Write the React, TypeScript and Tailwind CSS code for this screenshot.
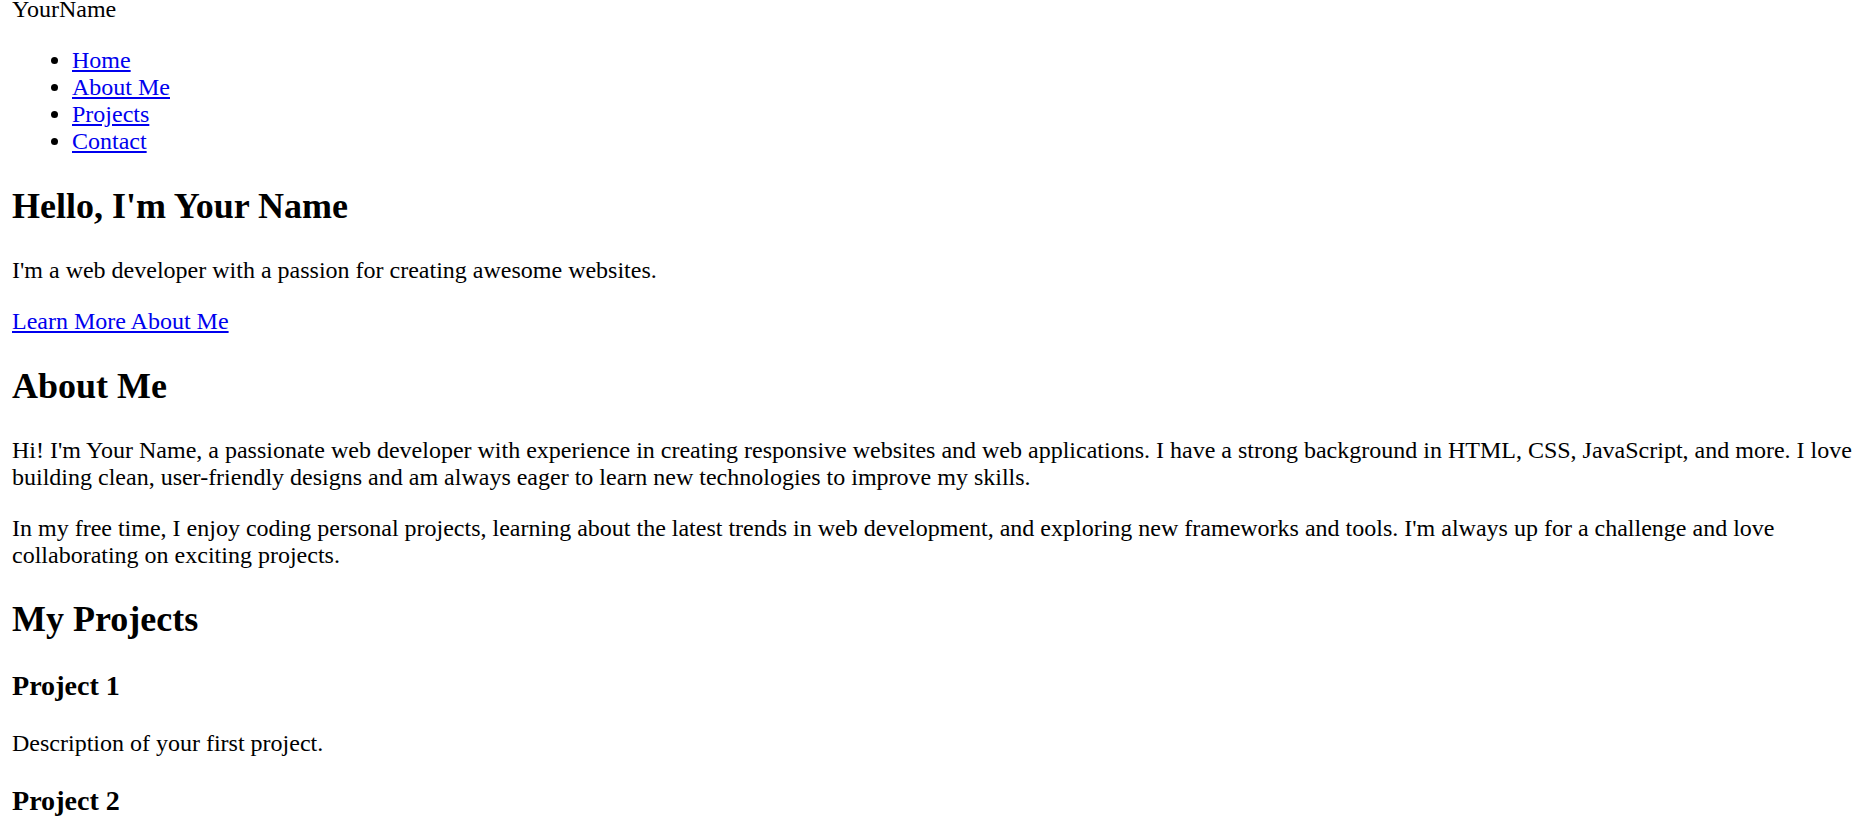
const navLinks = ["Home", "About Me", "Projects", "Contact"];

const projects = [
  { title: "Project 1", description: "Description of your first project." },
  { title: "Project 2", description: "Description of your second project." },
  { title: "Project 3", description: "Description of your third project." },
];

export default function App() {
  return (
    <div className="min-h-screen bg-white text-black font-['Liberation_Serif','Times_New_Roman',serif] text-[24px] leading-[normal]">
      <div className="px-[12px] -mt-[4px]">
        <header>
          <div>YourName</div>
          <nav>
            <ul className="my-[24px] pl-[60px] list-disc">
              {navLinks.map((link) => (
                <li key={link}>
                  <a href="#" className="text-[#0000ee] underline">
                    {link}
                  </a>
                </li>
              ))}
            </ul>
          </nav>
        </header>

        <main>
          <section id="home">
            <h1 className="text-[36px] font-bold my-[29.88px]">Hello, I'm Your Name</h1>
            <p className="my-[24px]">I'm a web developer with a passion for creating awesome websites.</p>
            <p className="my-[24px]">
              <a href="#about" className="text-[#0000ee] underline">
                Learn More About Me
              </a>
            </p>
          </section>

          <section id="about">
            <h2 className="text-[36px] font-bold my-[29.88px]">About Me</h2>
            <p className="my-[24px]">
              Hi! I'm Your Name, a passionate web developer with experience in creating responsive websites and web
              applications. I have a strong background in HTML, CSS, JavaScript, and more. I love building clean,
              user-friendly designs and am always eager to learn new technologies to improve my skills.
            </p>
            <p className="my-[24px]">
              In my free time, I enjoy coding personal projects, learning about the latest trends in web development, and
              exploring new frameworks and tools. I'm always up for a challenge and love collaborating on exciting
              projects.
            </p>
          </section>

          <section id="projects">
            <h2 className="text-[36px] font-bold my-[29.88px]">My Projects</h2>
            {projects.map((p) => (
              <div key={p.title}>
                <h3 className="text-[28.08px] font-bold my-[28.08px]">{p.title}</h3>
                <p className="my-[24px]">{p.description}</p>
              </div>
            ))}
          </section>

          <section id="contact">
            <h2 className="text-[36px] font-bold my-[29.88px]">Contact Me</h2>
            <p className="my-[24px]">Feel free to reach out to me via email.</p>
          </section>
        </main>
      </div>
    </div>
  );
}
